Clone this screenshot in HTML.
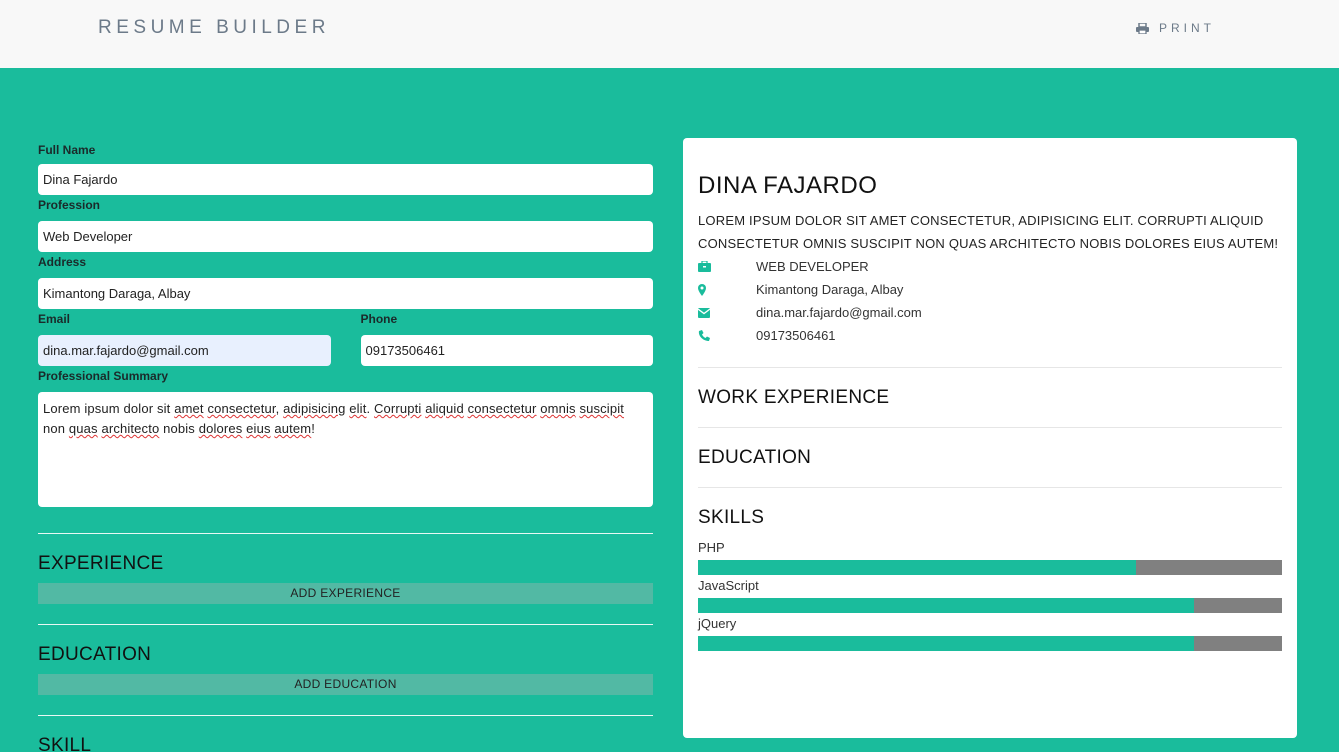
<!DOCTYPE html>
<html style="width:1339px;height:752px;overflow:hidden"><head><meta charset="utf-8"><style>
*{box-sizing:border-box;margin:0;padding:0}
body{width:1339px;height:752px;overflow:hidden;background:#1abc9c;font-family:"Liberation Sans",sans-serif;color:#111;position:relative}
.hdr{height:68px;background:#f8f8f8;position:relative}
.brand{position:absolute;left:98px;top:17px;font-size:19px;letter-spacing:4.5px;color:#6c7a89}
.print{position:absolute;left:1136px;top:21px;font-size:12px;letter-spacing:4px;color:#6c7a89;display:flex;align-items:center;gap:10px}
.left{position:absolute;left:38px;top:140px;width:615px}
label{display:block;font-size:12px;font-weight:bold;color:#1a2a2a;height:17px;line-height:17px;margin-top:2px}
.inp{background:#fff;border-radius:4px;height:31px;line-height:31px;padding-left:5px;font-size:13px;color:#222;margin-top:7px}
.row{display:flex;gap:30px}
.row>div{flex:1}
.ta{height:115px;line-height:20px;padding:7px 5px 5px;font-size:13px;letter-spacing:.15px}
.u{text-decoration:underline wavy #d33;text-decoration-thickness:1px}
hr{border:0;border-top:1px solid #e8f8f4;margin:0}
h3{font-weight:normal;font-size:19px;letter-spacing:.3px;color:#111}
.btn{background:#52b9a4;height:21px;line-height:21px;text-align:center;font-size:12px;color:#222;letter-spacing:.3px}
.card{position:absolute;left:683px;top:138px;width:614px;height:600px;background:#fff;border-radius:4px;padding:0 15px}
.card h1{font-weight:normal;font-size:24px;letter-spacing:.5px;margin-top:34px;color:#111}
.sum{font-size:13px;line-height:23px;margin-top:9px;color:#222;letter-spacing:.2px}
.info{display:flex;align-items:center;height:23px;font-size:13px;color:#333}
.info svg{width:58px;flex:none}
.card hr{border-top:1px solid #e6e6e6}
.card h3{padding:19px 0 18px}
.sk{font-size:13px;color:#333;height:20px;line-height:16px;margin-top:3px}
.bar{height:15px;background:#808080}
.bar div{height:100%;background:#1abc9c}
</style></head><body>
<div class="hdr"><div class="brand">RESUME BUILDER</div>
<div class="print"><svg width="13" height="11" viewBox="0 0 13 11"><rect x="3" y="0" width="7" height="4" fill="none" stroke="#6c7a89" stroke-width="1.5"/><rect x="0" y="4" width="13" height="5" rx="1" fill="#6c7a89"/><rect x="3" y="7" width="7" height="4" fill="#fff" stroke="#6c7a89" stroke-width="1.3"/></svg>PRINT</div></div>
<div class="left">
<label>Full Name</label><div class="inp" style="margin-top:5px">Dina Fajardo</div>
<label>Profession</label><div class="inp">Web Developer</div>
<label>Address</label><div class="inp">Kimantong Daraga, Albay</div>
<div class="row"><div><label>Email</label><div class="inp" style="background:#e8f0fe">dina.mar.fajardo@gmail.com</div></div><div><label>Phone</label><div class="inp">09173506461</div></div></div>
<label>Professional Summary</label>
<div class="inp ta">Lorem ipsum dolor sit <span class="u">amet</span> <span class="u">consectetur</span>, <span class="u">adipisicing</span> <span class="u">elit</span>. <span class="u">Corrupti</span> <span class="u">aliquid</span> <span class="u">consectetur</span> <span class="u">omnis</span> <span class="u">suscipit</span> non <span class="u">quas</span> <span class="u">architecto</span> nobis <span class="u">dolores</span> <span class="u">eius</span> <span class="u">autem</span>!</div>
<hr style="margin-top:26px">
<h3 style="margin-top:19px;height:30px">EXPERIENCE</h3>
<div class="btn">ADD EXPERIENCE</div>
<hr style="margin-top:20px">
<h3 style="margin-top:19px;height:30px">EDUCATION</h3>
<div class="btn">ADD EDUCATION</div>
<hr style="margin-top:20px">
<h3 style="margin-top:19px">SKILL</h3>
</div>
<div class="card">
<h1>DINA FAJARDO</h1>
<div class="sum">LOREM IPSUM DOLOR SIT AMET CONSECTETUR, ADIPISICING ELIT. CORRUPTI ALIQUID CONSECTETUR OMNIS SUSCIPIT NON QUAS ARCHITECTO NOBIS DOLORES EIUS AUTEM!</div>
<div class="info"><svg height="11" viewBox="0 0 58 11"><rect x="0" y="2" width="13" height="9" rx="1" fill="#1abc9c"/><rect x="4" y="0" width="5" height="3" fill="none" stroke="#1abc9c" stroke-width="1.2"/><rect x="5" y="5" width="3" height="1.5" fill="#fff"/></svg>WEB DEVELOPER</div>
<div class="info"><svg height="12" viewBox="0 0 58 12"><path d="M4 0a4 4 0 0 1 4 4c0 3-4 8-4 8s-4-5-4-8a4 4 0 0 1 4-4z" fill="#1abc9c"/><circle cx="4" cy="4" r="1.5" fill="#fff"/></svg>Kimantong Daraga, Albay</div>
<div class="info"><svg height="10" viewBox="0 0 58 10"><rect x="0" y="0" width="12" height="10" rx="1" fill="#1abc9c"/><path d="M0 1l6 4.5 6-4.5" stroke="#fff" stroke-width="1.3" fill="none"/></svg>dina.mar.fajardo@gmail.com</div>
<div class="info"><svg height="11" viewBox="0 0 58 11"><path d="M1 1l3-1 1.5 3-1.5 1.5c.8 1.6 2 2.8 3.5 3.5L9 6.5l3 1.5-1 3C5 11 0 6 1 1z" fill="#1abc9c"/></svg>09173506461</div>
<hr style="margin-top:20px"><h3>WORK EXPERIENCE</h3>
<hr><h3>EDUCATION</h3>
<hr><h3 style="padding-bottom:0">SKILLS</h3>
<div class="sk" style="margin-top:11px">PHP</div><div class="bar"><div style="width:75%"></div></div>
<div class="sk">JavaScript</div><div class="bar"><div style="width:85%"></div></div>
<div class="sk">jQuery</div><div class="bar"><div style="width:85%"></div></div>
</div>
</body></html>
